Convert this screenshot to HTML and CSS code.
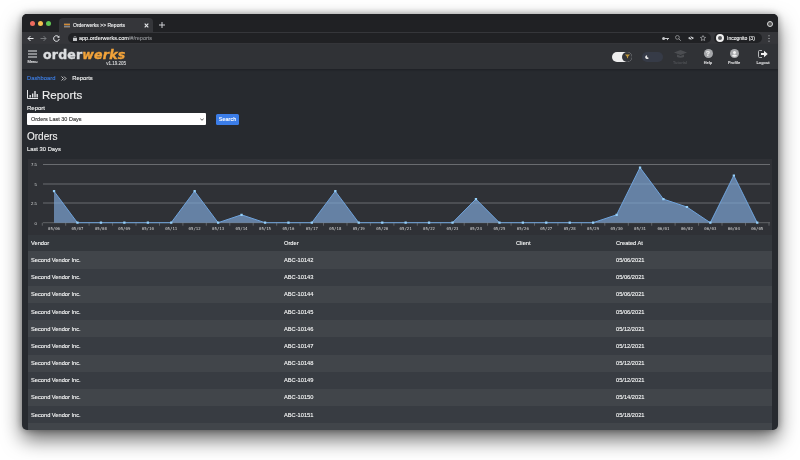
FILE: index.html
```html
<!DOCTYPE html>
<html lang="en">
<head>
  <meta charset="UTF-8">
  <title>Orderwerks >> Reports</title>
  <link rel="stylesheet" href="styles.css">
</head>
<body>
<div class="window">

  <!-- browser tabs -->
  <div class="tabstrip">
    <div class="lights">
      <span class="light red"></span>
      <span class="light yellow"></span>
      <span class="light green"></span>
    </div>
    <div class="tab">
      <svg class="favicon" width="6" height="5" viewBox="0 0 6 5"><rect width="6" height="5" fill="#6b5b4a"/><rect y="1" width="6" height="1" fill="#d08a35"/><rect y="3" width="6" height="1" fill="#7d8794"/></svg>
      <span class="tab-title">Orderwerks &gt;&gt; Reports</span>
      <svg class="tab-close" width="5" height="5" viewBox="0 0 5 5"><path d="M.7.7l3.6 3.6M4.3.7L.7 4.3" stroke="#e8eaed" stroke-width="1.1"/></svg>
    </div>
    <svg class="tab-new" width="6" height="6" viewBox="0 0 6 6"><path d="M3 0v6M0 3h6" stroke="#cfd1d4" stroke-width="1"/></svg>
    <span class="strip-badge"></span>
  </div>

  <!-- browser toolbar -->
  <div class="toolbar">
    <svg class="nav" width="7" height="7" viewBox="0 0 7 7"><path d="M6.5 3.5H1M3.5 1L1 3.5 3.5 6" fill="none" stroke="#e8eaed" stroke-width="1"/></svg>
    <svg class="nav" width="7" height="7" viewBox="0 0 7 7"><path d="M.5 3.5H6M3.5 1L6 3.5 3.5 6" fill="none" stroke="#77797c" stroke-width="1"/></svg>
    <svg class="nav" width="7" height="7" viewBox="0 0 7 7"><path d="M5.9 2.2A2.8 2.8 0 1 0 6.2 4" fill="none" stroke="#e8eaed" stroke-width="1"/><path d="M6.4.6v2.2H4.2z" fill="#e8eaed"/></svg>
    <div class="omnibox">
      <svg width="4" height="5" viewBox="0 0 4 5"><rect y="2" width="4" height="3" fill="#c4c6c9"/><path d="M1 2V1.2a1 1 0 0 1 2 0V2" fill="none" stroke="#c4c6c9" stroke-width=".6"/></svg>
      <span class="url">app.orderwerks.com<span class="url-path">/#/reports</span></span>
      <div class="omni-icons">
        <svg width="7" height="5" viewBox="0 0 7 5"><circle cx="1.6" cy="2.5" r="1.5" fill="#c4c6c9"/><path d="M3 2.5h4M5.5 2.5v1.6" stroke="#c4c6c9"/></svg>
        <svg width="6" height="6" viewBox="0 0 6 6"><circle cx="2.4" cy="2.4" r="1.9" fill="none" stroke="#a9abae" stroke-width=".7"/><path d="M3.8 3.8L5.8 5.8" stroke="#a9abae" stroke-width=".8"/></svg>
        <svg width="6" height="6" viewBox="0 0 6 6"><path d="M0 3q3-3 6 0q-3 3-6 0z" fill="#c4c6c9"/><path d="M.8.8l4.6 4.6" stroke="#202124" stroke-width=".8"/></svg>
        <svg width="6" height="6" viewBox="0 0 6 6"><path d="M3 .5l.8 1.7 1.8.2-1.4 1.2.4 1.9L3 4.6l-1.6.9.4-1.9L.4 2.4l1.8-.2z" fill="none" stroke="#c4c6c9" stroke-width=".6"/></svg>
      </div>
    </div>
    <div class="incognito">
      <span class="incognito-dot"></span>
      <span>Incognito (3)</span>
    </div>
    <svg class="kebab" width="2" height="7" viewBox="0 0 2 7"><path d="M1 .3v1M1 3v1M1 5.7v1" stroke="#c4c6c9" stroke-width="1"/></svg>
  </div>

  <!-- app header -->
  <header class="app-header">
    <div class="menu">
      <svg width="9" height="8" viewBox="0 0 9 8"><path d="M0 1h9M0 4h9M0 7h9" stroke="#e4e5e7" stroke-width="1.1"/></svg>
      <span>Menu</span>
    </div>
    <div class="logo">
      <div class="logo-name">order<span class="logo-accent">werks</span></div>
      <div class="logo-version">v1.19.205</div>
    </div>
    <div class="header-right">
      <div class="switch switch-light">
        <span class="switch-knob">
          <svg width="5" height="5" viewBox="0 0 5 5"><path d="M0 .5h5L3 2.8V4.5L2 3.8V2.8z" fill="#c29a3a"/></svg>
        </span>
      </div>
      <div class="switch switch-dark">
        <svg width="4" height="4" viewBox="0 0 4 4"><path d="M2.2.2a1.9 1.9 0 1 0 1.6 2.7A2 2 0 0 1 2.2.2z" fill="#e8e8e8"/></svg>
      </div>
      <div class="head-btn dim">
        <svg width="13" height="8" viewBox="0 0 13 8"><path d="M6.5 0L13 2.5 6.5 5 0 2.5z" fill="#4b4d51"/><path d="M3 4.500V7q3.500 1.500 7 0V4.500L6.500 6z" fill="#4b4d51"/></svg>
        <span>Tutorial</span>
      </div>
      <div class="head-btn help-btn">
        <span class="round-icon">?</span>
        <span>Help</span>
      </div>
      <div class="head-btn">
        <svg width="9" height="9" viewBox="0 0 9 9"><circle cx="4.5" cy="4.5" r="4.5" fill="#a6a8ab"/><circle cx="4.5" cy="3.4" r="1.5" fill="#f1f1f1"/><path d="M1.8 7q2.7-2.8 5.4 0q-2.7 1.6-5.4 0z" fill="#f1f1f1"/></svg>
        <span>Profile</span>
      </div>
      <div class="head-btn logout-btn">
        <svg width="10" height="8" viewBox="0 0 10 8"><path d="M4 .5H1.5a1 1 0 0 0-1 1v5a1 1 0 0 0 1 1H4" fill="none" stroke="#d8d9db" stroke-width=".8"/><path d="M3 3h3V.8L9.7 4 6 7.2V5H3z" fill="#f1f1f1"/></svg>
        <span>Logout</span>
      </div>
    </div>
  </header>

  <main class="content">
    <div class="breadcrumb">
      <a class="crumb-link">Dashboard</a>
      <svg width="6" height="5" viewBox="0 0 6 5"><path d="M.5.5L2.5 2.5.5 4.5M3 .5L5 2.5 3 4.5" fill="none" stroke="#e4e5e7" stroke-width=".8"/></svg>
      <span>Reports</span>
    </div>

    <h1 class="page-title">
      <svg width="11" height="9" viewBox="0 0 11 9"><path d="M.5 0v8.5H11" fill="none" stroke="#e4e5e7" stroke-width="1"/><path d="M2.5 5h1.400v2.500H2.500zM5 3.500h1.400v4H5zM7.300 1h1.400v6.500H7.300zM9.500 4h1.400v3.500H9.500z" fill="#e4e5e7"/></svg>
      Reports
    </h1>

    <label class="field-label">Report</label>
    <div class="report-form">
      <div class="select">
        <span>Orders Last 30 Days</span>
        <svg width="4" height="3" viewBox="0 0 4 3"><path d="M.3.5L2 2.3 3.7.5" fill="none" stroke="#333" stroke-width=".8"/></svg>
      </div>
      <button class="search-btn">Search</button>
    </div>

    <h2 class="section-title">Orders</h2>
    <p class="section-sub">Last 30 Days</p>

    <div class="chart">
      <svg width="744" height="76" viewBox="28 159 744 76">
        <g class="grid">
          <path d="M43 164.5H770M43 184H770M43 203H770"/>
        </g>
        <path class="axis" d="M43 222.7H770M42.3 222.7v3M65.7 222.7v3M89.1 222.7v3M112.6 222.7v3M136 222.7v3M159.5 222.7v3M182.9 222.7v3M206.3 222.7v3M229.8 222.7v3M253.2 222.7v3M276.7 222.7v3M300.1 222.7v3M323.5 222.7v3M347 222.7v3M370.4 222.7v3M393.9 222.7v3M417.3 222.7v3M440.7 222.7v3M464.2 222.7v3M487.6 222.7v3M511.1 222.7v3M534.5 222.7v3M557.9 222.7v3M581.4 222.7v3M604.8 222.7v3M628.3 222.7v3M651.7 222.7v3M675.1 222.7v3M698.6 222.7v3M722 222.7v3M745.5 222.7v3M769 222.7v3"/>
        <polygon class="area" points="54,222.7 54,191.2 77.4,222.7 171.2,222.7 194.6,191.2 218.1,222.7 241.5,214.8 265,222.7 311.8,222.7 335.3,191.2 358.7,222.7 452.5,222.7 475.9,199.1 499.4,222.7 593.1,222.7 616.6,214.8 640,167.6 663.4,199.1 686.9,207 710.3,222.7 733.8,175.5 757.2,222.7"/>
        <polyline class="line" points="54,191.2 77.4,222.7 171.2,222.7 194.6,191.2 218.1,222.7 241.5,214.8 265,222.7 311.8,222.7 335.3,191.2 358.7,222.7 452.5,222.7 475.9,199.1 499.4,222.7 593.1,222.7 616.6,214.8 640,167.6 663.4,199.1 686.9,207 710.3,222.7 733.8,175.5 757.2,222.7"/>
        <path class="dots" d="M54 191.2h.1M77.4 222.7h.1M100.9 222.7h.1M124.3 222.7h.1M147.8 222.7h.1M171.2 222.7h.1M194.6 191.2h.1M218.1 222.7h.1M241.5 214.8h.1M265 222.7h.1M288.4 222.7h.1M311.8 222.7h.1M335.3 191.2h.1M358.7 222.7h.1M382.2 222.7h.1M405.6 222.7h.1M429 222.7h.1M452.5 222.7h.1M475.9 199.1h.1M499.4 222.7h.1M522.8 222.7h.1M546.2 222.7h.1M569.7 222.7h.1M593.1 222.7h.1M616.6 214.8h.1M640 167.6h.1M663.4 199.1h.1M686.9 207h.1M710.3 222.7h.1M733.8 175.5h.1M757.2 222.7h.1"/>
        <g class="y-labels">
          <text x="37" y="166">7.5</text>
          <text x="37" y="185.5">5</text>
          <text x="37" y="204.5">2.5</text>
          <text x="37" y="224.5">0</text>
        </g>
        <g class="x-labels">
          <text x="54" y="229.5">05/06</text>
          <text x="77.4" y="229.5">05/07</text>
          <text x="100.9" y="229.5">05/08</text>
          <text x="124.3" y="229.5">05/09</text>
          <text x="147.8" y="229.5">05/10</text>
          <text x="171.2" y="229.5">05/11</text>
          <text x="194.6" y="229.5">05/12</text>
          <text x="218.1" y="229.5">05/13</text>
          <text x="241.5" y="229.5">05/14</text>
          <text x="265" y="229.5">05/15</text>
          <text x="288.4" y="229.5">05/16</text>
          <text x="311.8" y="229.5">05/17</text>
          <text x="335.3" y="229.5">05/18</text>
          <text x="358.7" y="229.5">05/19</text>
          <text x="382.2" y="229.5">05/20</text>
          <text x="405.6" y="229.5">05/21</text>
          <text x="429" y="229.5">05/22</text>
          <text x="452.5" y="229.5">05/23</text>
          <text x="475.9" y="229.5">05/24</text>
          <text x="499.4" y="229.5">05/25</text>
          <text x="522.8" y="229.5">05/26</text>
          <text x="546.2" y="229.5">05/27</text>
          <text x="569.7" y="229.5">05/28</text>
          <text x="593.1" y="229.5">05/29</text>
          <text x="616.6" y="229.5">05/30</text>
          <text x="640" y="229.5">05/31</text>
          <text x="663.4" y="229.5">06/01</text>
          <text x="686.9" y="229.5">06/02</text>
          <text x="710.3" y="229.5">06/03</text>
          <text x="733.8" y="229.5">06/04</text>
          <text x="757.2" y="229.5">06/05</text>
        </g>
      </svg>
    </div>

    <table class="orders">
      <thead>
        <tr><th class="col-vendor">Vendor</th><th class="col-order">Order</th><th class="col-client">Client</th><th>Created At</th></tr>
      </thead>
      <tbody>
        <tr><td>Second Vendor Inc.</td><td>ABC-10142</td><td></td><td>05/06/2021</td></tr>
        <tr><td>Second Vendor Inc.</td><td>ABC-10143</td><td></td><td>05/06/2021</td></tr>
        <tr><td>Second Vendor Inc.</td><td>ABC-10144</td><td></td><td>05/06/2021</td></tr>
        <tr><td>Second Vendor Inc.</td><td>ABC-10145</td><td></td><td>05/06/2021</td></tr>
        <tr><td>Second Vendor Inc.</td><td>ABC-10146</td><td></td><td>05/12/2021</td></tr>
        <tr><td>Second Vendor Inc.</td><td>ABC-10147</td><td></td><td>05/12/2021</td></tr>
        <tr><td>Second Vendor Inc.</td><td>ABC-10148</td><td></td><td>05/12/2021</td></tr>
        <tr><td>Second Vendor Inc.</td><td>ABC-10149</td><td></td><td>05/12/2021</td></tr>
        <tr><td>Second Vendor Inc.</td><td>ABC-10150</td><td></td><td>05/14/2021</td></tr>
        <tr><td>Second Vendor Inc.</td><td>ABC-10151</td><td></td><td>05/18/2021</td></tr>
        <tr><td></td><td></td><td></td><td></td></tr>
      </tbody>
    </table>
  </main>
</div>
</body>
</html>
```

FILE: styles.css
```css
html, body {
  margin: 0;
  height: 460px;
  overflow: hidden;
  background-color: #fff;
  font-family: "Liberation Sans", Arial, sans-serif;
  color: #f2f3f3;
}

/* the shot was scaled down, so everything in it is a little soft */
.window {
  display: flex;
  flex-direction: column;
  height: 416px;
  margin: 14px 22px 0;
  overflow: hidden;
  border-radius: 5px;
  background-color: #272a2f;
  box-shadow: 0 9px 20px rgba(0,0,0,0.6), 0 0 7px rgba(0,0,0,0.35);
  filter: blur(0.25px);
  -webkit-text-stroke: 0.12px;
}

/* browser chrome */
.tabstrip {
  display: flex;
  align-items: flex-end;
  height: 18px;
  flex-shrink: 0;
  padding-left: 8px;
  background-color: #202124;
}

.lights {
  display: flex;
  gap: 3px;
  align-self: center;
  margin-right: 8px;
}

.light {
  width: 5px;
  height: 5px;
  border-radius: 50%;
}

.red { background-color: #ed6a5e; }
.yellow { background-color: #f5bf4f; }
.green { background-color: #61c554; }

.tab {
  display: flex;
  align-items: center;
  width: 94px;
  height: 14px;
  box-sizing: border-box;
  padding: 0 4px 0 5px;
  border-radius: 4px 4px 0 0;
  background-color: #35363a;
  font-size: 5px;
  color: #f0f1f2;
}

.tab-title {
  flex: 1;
  margin-left: 3px;
}

.tab-new {
  margin: 0 0 4px 6px;
}

.strip-badge {
  width: 6px;
  height: 6px;
  margin: 0 5px 5px auto;
  border-radius: 50%;
  border: 1.5px solid #d8d9db;
  box-sizing: border-box;
  background-color: #555;
}

.toolbar {
  display: flex;
  align-items: center;
  height: 12px;
  flex-shrink: 0;
  padding: 0 8px 0 5px;
  gap: 6px;
  background-color: #35363a;
}

.omnibox {
  display: flex;
  align-items: center;
  flex: 1;
  height: 10px;
  margin-left: 2px;
  padding: 0 5px;
  border-radius: 5px;
  background-color: #202124;
  font-size: 5.5px;
}

.url {
  margin-left: 2px;
  color: #f0f1f2;
}

.url-path {
  color: #8e9094;
}

.omni-icons {
  display: flex;
  align-items: center;
  gap: 6.5px;
  margin-left: auto;
}

.incognito {
  display: flex;
  align-items: center;
  gap: 3px;
  width: 48px;
  height: 10px;
  margin-left: -3px;
  border-radius: 5px;
  background-color: #202124;
  font-size: 5px;
  color: #f0f1f2;
  box-sizing: border-box;
  padding-left: 2px;
}

.incognito-dot {
  width: 8px;
  height: 8px;
  border-radius: 50%;
  border: 2px solid #f1f1f1;
  box-sizing: border-box;
  background-color: #5a5b5e;
}

/* app header */
.app-header {
  display: flex;
  align-items: center;
  height: 25px;
  flex-shrink: 0;
  padding: 0 2px 0 5px;
  background-color: #303236;
  box-shadow: 0 1px 2px rgba(0,0,0,0.25);
}

.menu {
  display: flex;
  flex-direction: column;
  align-items: center;
  width: 11px;
  gap: 1px;
  font-size: 4px;
  color: #e4e5e7;
}

.logo {
  display: flex;
  flex-direction: column;
  width: 83px;
  margin: 2px 0 0 5px;
}

.logo-name {
  font-family: "DejaVu Sans", sans-serif;
  font-weight: bold;
  font-size: 12.5px;
  line-height: 12px;
  letter-spacing: 0.2px;
  white-space: nowrap;
  color: #dcdee0;
  -webkit-text-stroke: 0.4px;
}

.logo-accent {
  font-style: italic;
  color: #f2a33a;
}

.logo-version {
  align-self: flex-end;
  font-size: 4.5px;
  line-height: 5px;
  color: #d8d9db;
}

.header-right {
  display: flex;
  align-items: center;
  margin-left: auto;
}

.switch {
  display: flex;
  align-items: center;
  width: 20px;
  height: 10px;
  margin-right: 10px;
  border-radius: 5px;
  box-sizing: border-box;
}

.switch-light {
  justify-content: flex-end;
  background-color: #eeeeee;
}

.switch-knob {
  display: flex;
  align-items: center;
  justify-content: center;
  width: 10px;
  height: 10px;
  border-radius: 50%;
  background-color: #33353a;
}

.switch-dark {
  width: 21px;
  margin-right: 4px;
  padding-left: 3px;
  background-color: #363b47;
}

.head-btn {
  display: flex;
  flex-direction: column;
  align-items: center;
  justify-content: flex-end;
  width: 26px;
  height: 17px;
  gap: 2px;
  font-size: 3.9px;
  font-weight: bold;
  color: #d8d9db;
}

.head-btn.dim {
  color: #4b4d51;
}

.help-btn {
  margin-left: 2px;
}

.logout-btn {
  margin-left: 3px;
}

.round-icon {
  width: 9px;
  height: 9px;
  border-radius: 50%;
  background-color: #a6a8ab;
  font-size: 7px;
  line-height: 9px;
  text-align: center;
  color: #eee;
}

/* page */
.content {
  flex: 1;
  min-height: 0;
  padding: 5px 6px 0 5px;
}

.breadcrumb {
  display: flex;
  align-items: center;
  gap: 5.5px;
  height: 8px;
  font-size: 5.8px;
}

.crumb-link {
  color: #3d7fe6;
}

.page-title {
  display: flex;
  align-items: center;
  gap: 4px;
  height: 13px;
  margin: 6px 0 0;
  padding-bottom: 1px;
  font-size: 11.5px;
  font-weight: normal;
  color: #f0f0f0;
}

.field-label {
  display: block;
  margin-top: 3px;
  font-size: 6px;
  line-height: 6px;
}

.report-form {
  display: flex;
  align-items: center;
  gap: 10px;
  margin-top: 2px;
}

.select {
  display: flex;
  align-items: center;
  justify-content: space-between;
  width: 179px;
  height: 12px;
  box-sizing: border-box;
  padding: 0 2px 0 4px;
  border-radius: 1px;
  background-color: #fff;
  font-size: 5.5px;
  color: #333;
}

.search-btn {
  width: 23px;
  height: 11px;
  padding: 0;
  border: none;
  border-radius: 1.5px;
  background-color: #3b7de8;
  color: white;
  font-family: inherit;
  font-size: 5.5px;
}

.section-title {
  margin: 6px 0 0;
  font-size: 10px;
  line-height: 12px;
  font-weight: normal;
  color: #f0f0f0;
}

.section-sub {
  margin: 3px 0 0;
  font-size: 5.8px;
  line-height: 6px;
}

.chart {
  height: 76px;
  margin: 7px 0 0 1px;
  background-color: #2f3136;
}

.chart svg {
  display: block;
}

.grid path {
  fill: none;
  stroke: #6a6c70;
  stroke-width: 1;
}

.axis {
  fill: none;
  stroke: #77797c;
  stroke-width: 0.7;
}

.area {
  fill: #7fa8d8;
  fill-opacity: 0.68;
}

.line {
  fill: none;
  stroke: #6fa3dc;
  stroke-width: 1;
}

.dots {
  fill: none;
  stroke: #95d0fa;
  stroke-width: 2.2;
  stroke-linecap: square;
}

.y-labels text {
  font-size: 4.3px;
  text-anchor: end;
  fill: #d8d9da;
}

.x-labels text {
  font-family: "DejaVu Sans Mono", monospace;
  font-size: 4px;
  text-anchor: middle;
  fill: #d8d9da;
}

.orders {
  width: 744px;
  margin-left: 1px;
  border-collapse: collapse;
  table-layout: fixed;
  font-size: 5.7px;
  color: #f4f5f5;
}

.orders th {
  height: 16.4px;
  padding: 0 0 0 3px;
  background-color: #33373c;
  font-weight: normal;
  text-align: left;
}

.orders td {
  height: 17.2px;
  padding: 0 0 0 3px;
  background-color: #383c42;
}

.orders tbody tr:nth-child(odd) td {
  background-color: #41454a;
}

.col-vendor { width: 250px; }
.col-order { width: 229px; }
.col-client { width: 97px; }
```
